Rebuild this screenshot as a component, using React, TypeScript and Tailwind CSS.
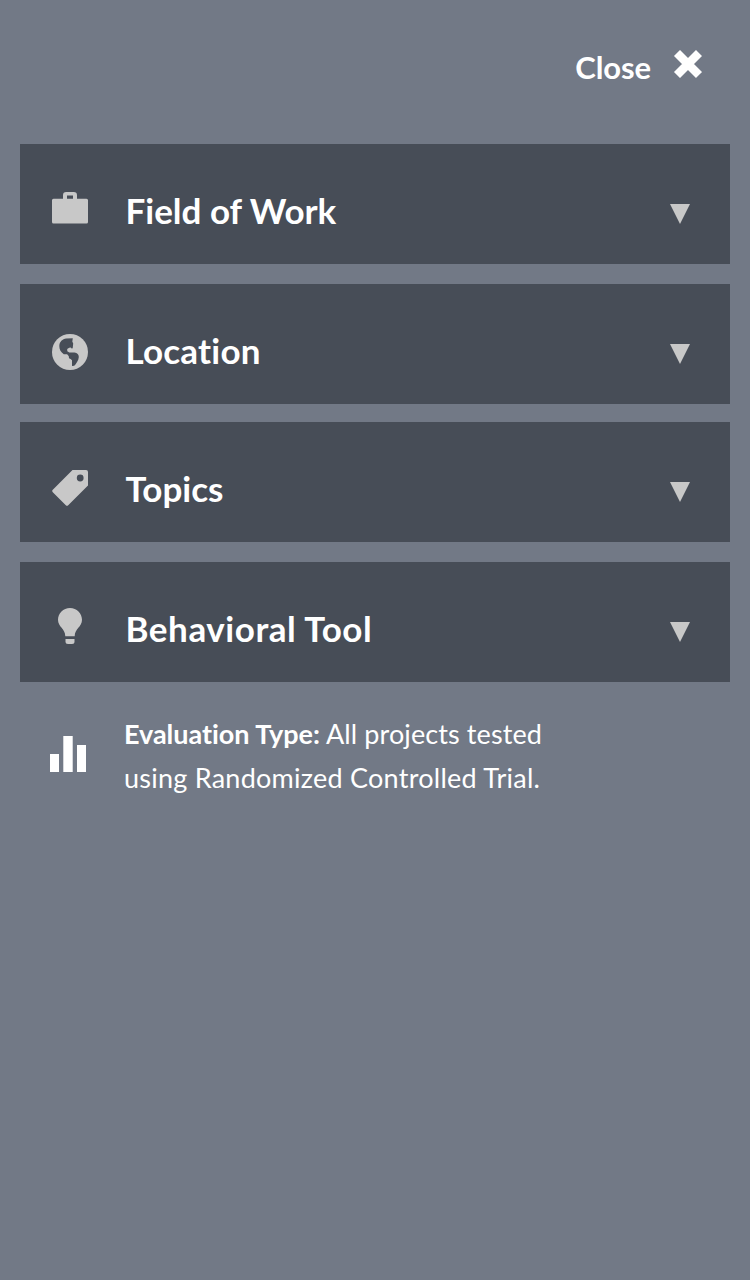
import type { ReactNode } from "react";

function Briefcase() {
  return (
    <svg width="36" height="36" viewBox="0 0 36 36" fill="#c8c8c8">
      <path fillRule="evenodd" d="M11 6.8V3.2Q11 0 14.2 0H21.8Q25 0 25 3.2V6.8H34.5Q36 6.8 36 8.3V30Q36 31.6 34.5 31.6H1.5Q0 31.6 0 30V8.3Q0 6.8 1.5 6.8ZM15 3.6V6.8H21V3.6Z" />
    </svg>
  );
}

function Globe() {
  return (
    <svg width="36" height="36" viewBox="0 0 36 36">
      <circle cx="18" cy="18" r="18" fill="#c8c8c8" />
      <path
        fill="#474d57"
        d="M20.8 4.2L20.3 7.4L21.2 9.6L20.7 14.2L19.6 14.5L18.8 13.6L17.2 13.8L15.2 15.1L15.3 17.2L17.3 18.5H22.5C25.3 18.7 26.8 20.5 26.8 23C26.6 26.8 24.4 28.8 22.9 31.2C21.9 32.1 20.5 32.2 20 31.7V26.3L18.6 25.1L17 24.2L16.8 22.3L15.4 20.6L14.9 20.2H11.8C8.8 18.4 7.3 15.8 7.3 12.1C7.3 7.9 10.5 5 14.2 4.6Z"
      />
    </svg>
  );
}

function Tag() {
  return (
    <svg width="36" height="36" viewBox="0 0 36 36" fill="#c8c8c8">
      <path fillRule="evenodd" d="M20.5 0H34Q36 0 36 2V15.5L16.2 35.2Q15 36.3 13.8 35.2L.8 22.2Q-.4 21 .8 19.8ZM28.2 4.6a3.4 3.4 0 1 0 0 6.8a3.4 3.4 0 1 0 0-6.8Z" />
    </svg>
  );
}

function Bulb() {
  return (
    <svg width="36" height="36" viewBox="0 0 36 36" fill="#c8c8c8">
      <path d="M18 0C11.2 0 6 5.2 6 11.8C6 19 13.3 20.7 13.3 28.2H22.7C22.7 20.7 30 19 30 11.8C30 5.2 24.8 0 18 0Z" />
      <path d="M13.5 31H22.5V33.5Q22.5 36 20 36H16Q13.5 36 13.5 33.5Z" />
    </svg>
  );
}

function FilterRow({ label, icon, tracking }: { label: string; icon: ReactNode; tracking: string }) {
  return (
    <button className="flex h-[120px] w-full items-start bg-[#474d57] pl-8 pr-10 pt-12 text-left">
      {icon}
      <span className={`ml-[37.5px] mt-[-2px] flex-1 whitespace-nowrap text-[35px] font-bold leading-10 ${tracking}`}>
        {label}
      </span>
      <svg className="mt-3" width="20" height="20" viewBox="0 0 20 20" fill="#c8c8c8">
        <path d="M0 0H20L10 20Z" />
      </svg>
    </button>
  );
}

export default function App() {
  return (
    <main className="min-h-screen bg-[#727986] px-5 font-['Lato',sans-serif] text-white">
      <header className="flex h-36 items-start justify-end pr-[27px] pt-[50px]">
        <button className="flex items-start">
          <span className="mt-[-1px] text-[31px] font-bold leading-9 tracking-[-0.1px]">Close</span>
          <svg className="ml-[22px]" width="30" height="28" viewBox="0 0 30 28">
            <path d="M4 3L26 25M26 3L4 25" stroke="white" strokeWidth="8.5" />
          </svg>
        </button>
      </header>
      <section className="flex flex-col">
        <FilterRow label="Field of Work" tracking="tracking-[0px]" icon={<Briefcase />} />
        <div className="mt-5"><FilterRow label="Location" tracking="tracking-[0.2px]" icon={<div className="mt-0.5"><Globe /></div>} /></div>
        <div className="mt-[18px]"><FilterRow label="Topics" tracking="tracking-[0px]" icon={<Tag />} /></div>
        <div className="mt-5"><FilterRow label="Behavioral Tool" tracking="tracking-[0.55px]" icon={<div className="-mt-0.5"><Bulb /></div>} /></div>
      </section>
      <section className="flex items-start pl-[30px] pt-[30px]">
        <svg className="mt-6" width="36" height="36" viewBox="0 0 36 36" fill="white">
          <path d="M0 18H9V36H0ZM13.3 0H22.7V36H13.3ZM27 9H36V36H27Z" />
        </svg>
        <p className="ml-[38px] whitespace-nowrap text-[27px] leading-[44px] [font-variant-ligatures:none]">
          <span className="block tracking-[0.1px]"><strong className="font-bold tracking-[-0.03px]">Evaluation Type:</strong> All projects tested</span>
          <span className="block tracking-[0.25px]">using Randomized Controlled Trial.</span>
        </p>
      </section>
    </main>
  );
}
